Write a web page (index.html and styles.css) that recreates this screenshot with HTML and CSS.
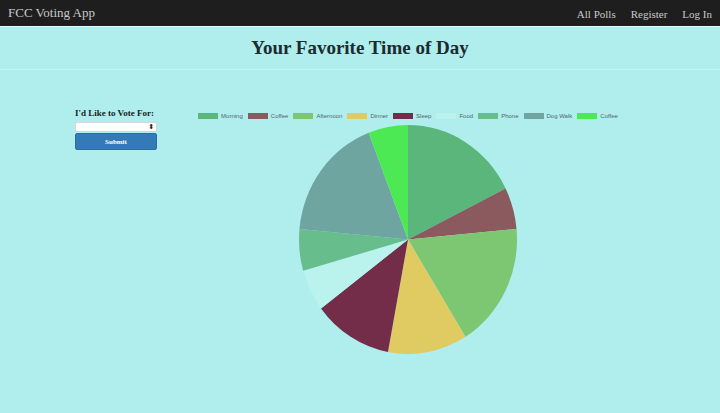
FILE: index.html
```html
<!DOCTYPE html>
<html>
<head>
<meta charset="utf-8">
<link rel="stylesheet" href="styles.css">
</head>
<body>
<nav class="navbar">
  <a class="brand" href="#">FCC Voting App</a>
  <ul class="nav-links">
    <li><a href="#">All Polls</a></li>
    <li><a href="#">Register</a></li>
    <li><a href="#">Log In</a></li>
  </ul>
</nav>
<header class="page-head">
  <h1>Your Favorite Time of Day</h1>
</header>
<hr class="divider">
<main class="content">
  <form class="vote-form">
    <label class="vote-label">I'd Like to Vote For:</label>
    <div class="select-box"><span class="select-arrow">⬍</span></div>
    <button type="button" class="submit-btn">Submit</button>
  </form>
  <section class="chart">
    <ul class="legend">
      <li><span class="swatch c-morning"></span>Morning</li>
      <li><span class="swatch c-coffee"></span>Coffee</li>
      <li><span class="swatch c-afternoon"></span>Afternoon</li>
      <li><span class="swatch c-dinner"></span>Dinner</li>
      <li><span class="swatch c-sleep"></span>Sleep</li>
      <li><span class="swatch c-food"></span>Food</li>
      <li><span class="swatch c-phone"></span>Phone</li>
      <li><span class="swatch c-dog"></span>Dog Walk</li>
      <li><span class="swatch c-coffee2"></span>Coffee</li>
    </ul>
    <svg class="pie" viewBox="0 0 220 220" preserveAspectRatio="none">
      <path fill="#5bb67b" d="M110 110 L110 0 A110 110 0 0 1 208.47 60.97 Z"/>
      <path fill="#8b5a5f" d="M110 110 L208.47 60.97 A110 110 0 0 1 219.53 99.86 Z"/>
      <path fill="#7dc772" d="M110 110 L219.53 99.86 A110 110 0 0 1 167.9 203.52 Z"/>
      <path fill="#e0cb63" d="M110 110 L167.9 203.52 A110 110 0 0 1 89.78 218.13 Z"/>
      <path fill="#742d49" d="M110 110 L89.78 218.13 A110 110 0 0 1 22.22 176.29 Z"/>
      <path fill="#baf2ee" d="M110 110 L22.22 176.29 A110 110 0 0 1 4.2 140.1 Z"/>
      <path fill="#68bd8c" d="M110 110 L4.2 140.1 A110 110 0 0 1 0.47 99.86 Z"/>
      <path fill="#6ea5a1" d="M110 110 L0.47 99.86 A110 110 0 0 1 70.27 7.42 Z"/>
      <path fill="#4de955" d="M110 110 L70.27 7.42 A110 110 0 0 1 110 0 Z"/>
    </svg>
  </section>
</main>
</body>
</html>
```

FILE: styles.css
```css
* { box-sizing: border-box; }

body {
  margin: 0;
  background: #afeeed;
  font-family: "Liberation Serif", "Times New Roman", serif;
  color: #1c2a2c;
}

.navbar {
  height: 27px;
  background: #1e1e1e;
  border-bottom: 1px solid #dff;
  display: flex;
  align-items: center;
  justify-content: space-between;
  padding: 0 8px;
}

.brand {
  color: #c9c9c9;
  text-decoration: none;
  font-size: 13px;
}

.nav-links {
  list-style: none;
  margin: 0;
  padding: 0;
  display: flex;
  gap: 15px;
}

.nav-links a {
  color: #c9c9c9;
  text-decoration: none;
  font-size: 11px;
}

.page-head h1 {
  margin: 9px 0 0;
  height: 33px;
  line-height: 24px;
  font-size: 19px;
  font-weight: bold;
  text-align: center;
  color: #1b2b2e;
}

.divider {
  margin: 0;
  border: 0;
  border-top: 1px solid #c3f3f2;
}

.content {
  display: flex;
  align-items: flex-start;
}

.vote-form {
  margin: 38px 0 0 75px;
  width: 82px;
  display: flex;
  flex-direction: column;
}

.vote-label {
  font-size: 9px;
  line-height: 10px;
  font-weight: bold;
  color: #1a1f22;
  white-space: nowrap;
}

.select-box {
  margin-top: 4px;
  height: 10px;
  background: #fff;
  border: 1px solid #d6d6d6;
  border-radius: 2px;
  display: flex;
  justify-content: flex-end;
  align-items: center;
  padding-right: 2px;
}

.select-arrow {
  font-family: "DejaVu Sans", sans-serif;
  font-size: 7px;
  line-height: 8px;
  color: #222;
}

.submit-btn {
  margin-top: 1px;
  height: 17px;
  background: #337ab7;
  border: 1px solid #2e6da4;
  border-radius: 2px;
  color: #fff;
  font-family: "Liberation Serif", serif;
  font-weight: bold;
  font-size: 7px;
  padding: 0;
}

.chart {
  margin-left: 18px;
  width: 466px;
  padding-top: 43px;
  display: flex;
  flex-direction: column;
  align-items: center;
}

.legend {
  list-style: none;
  margin: 0;
  padding: 0;
  display: flex;
  gap: 5px;
  font-family: "Liberation Sans", Arial, sans-serif;
  font-size: 6px;
  line-height: 6px;
  color: #566466;
}

.legend li {
  display: flex;
  align-items: center;
  gap: 3px;
}

.swatch {
  display: inline-block;
  width: 20px;
  height: 6px;
}

.c-morning { background: #5bb67b; }
.c-coffee { background: #8b5a5f; }
.c-afternoon { background: #7dc772; }
.c-dinner { background: #e0cb63; }
.c-sleep { background: #742d49; }
.c-food { background: #baf2ee; }
.c-phone { background: #68bd8c; }
.c-dog { background: #6ea5a1; }
.c-coffee2 { background: #4de955; }

.pie {
  display: block;
  margin-top: 6px;
  width: 218px;
  height: 229px;
}
```
